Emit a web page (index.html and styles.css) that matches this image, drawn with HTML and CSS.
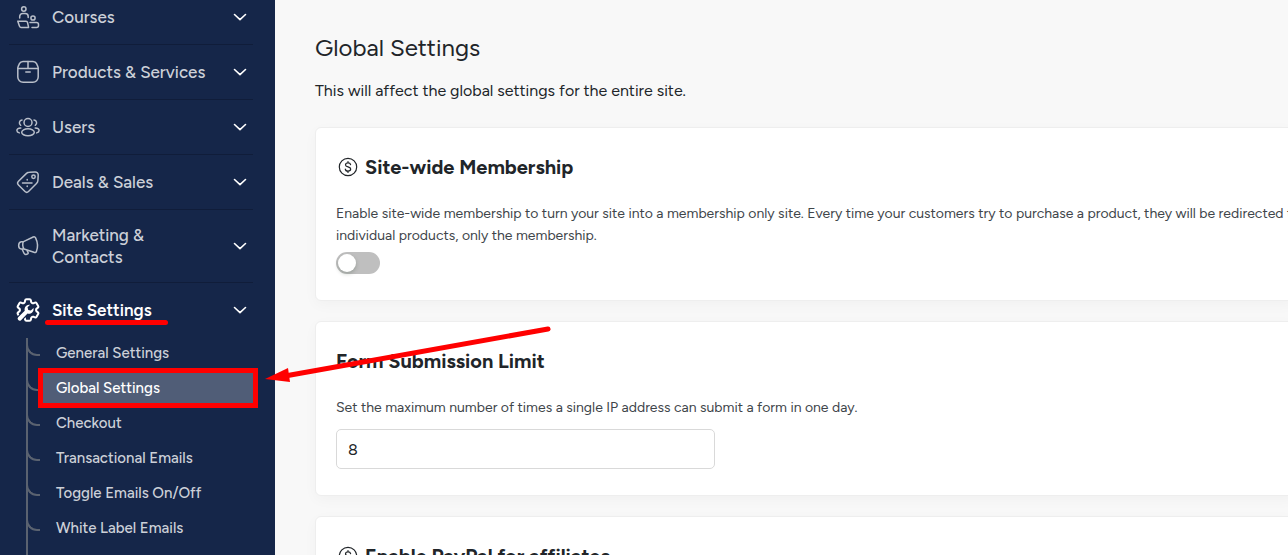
FILE: index.html
```html
<!DOCTYPE html>
<html lang="en">
<head>
    <meta charset="UTF-8">
    <meta name="viewport" content="width=device-width, initial-scale=1.0">
    <title>Global Settings</title>
    <link rel="stylesheet" href="styles.css">
</head>
<body>
    <div class="layout">
        <nav class="sidebar" aria-label="Main">
            <button class="menu-item first" type="button">
                <svg class="menu-icon" viewBox="0 0 24 24"><circle cx="7.800" cy="4" r="2.200"/><path d="M3.700 13v-1.500a3 3 0 0 1 3-3h2.500a3 3 0 0 1 3 3v1"/><circle cx="17" cy="13" r="2.100"/><path d="M14 17.500h6.500a2 2 0 0 1 2 2v1a2 2 0 0 1-2 2H16M1.800 16.200h8.200a1.500 1.500 0 0 1 1.500 1.200l1.100 5H5a1.500 1.500 0 0 1-1.500-1.200z"/></svg>
                <span class="menu-label">Courses</span>
                <svg class="chevron" viewBox="0 0 14 8"><path d="M1.500 1.500 7 6.700l5.500-5.200"/></svg>
            </button>
            <button class="menu-item" type="button">
                <svg class="menu-icon" viewBox="0 0 24 24"><path d="M7 1.500h10a4 4 0 0 1 3.600 2.200l1.200 2.700a4 4 0 0 1 .4 1.800V17a5.300 5.300 0 0 1-5.300 5.300H7.100A5.300 5.300 0 0 1 1.800 17V8.200a4 4 0 0 1 .4-1.800l1.200-2.700A4 4 0 0 1 7 1.500z"/><path d="M2 8.500h20M12 1.500v7M9.800 12h4.400"/></svg>
                <span class="menu-label">Products &amp; Services</span>
                <svg class="chevron" viewBox="0 0 14 8"><path d="M1.500 1.500 7 6.700l5.500-5.200"/></svg>
            </button>
            <button class="menu-item" type="button">
                <svg class="menu-icon" viewBox="0 0 24 24"><circle cx="12" cy="7.500" r="4"/><ellipse cx="12" cy="17.300" rx="6.300" ry="3.500"/><path d="M6 5a2.900 2.900 0 0 0-1.300 5.300M18 5a2.900 2.900 0 0 1 1.300 5.300M4.800 13c-2.400.2-3.900 1-3.900 2.500 0 1.200.9 2 2.400 2.400M19.200 13c2.400.2 3.900 1 3.900 2.500 0 1.200-.9 2-2.400 2.400"/></svg>
                <span class="menu-label">Users</span>
                <svg class="chevron" viewBox="0 0 14 8"><path d="M1.500 1.500 7 6.700l5.500-5.200"/></svg>
            </button>
            <button class="menu-item" type="button">
                <svg class="menu-icon" viewBox="0 0 24 24"><path d="M13.500 2.200 19 1.900a3 3 0 0 1 3.200 3.200l-.3 5.400a4.500 4.500 0 0 1-1.400 3l-8 8a2.500 2.500 0 0 1-3.500 0L2.500 15a2.700 2.700 0 0 1 0-3.800l8-7.800a4.500 4.500 0 0 1 3-1.200z"/><circle cx="17.500" cy="6.700" r="1.700"/><path d="M6.500 13h9.500M11.200 9.600v.4M11.200 16v.4"/></svg>
                <span class="menu-label">Deals &amp; Sales</span>
                <svg class="chevron" viewBox="0 0 14 8"><path d="M1.500 1.500 7 6.700l5.500-5.200"/></svg>
            </button>
            <button class="menu-item" type="button">
                <svg class="menu-icon" viewBox="0 0 24 24"><path d="M7.500 7.700 17.200 3c1-.5 1.900-.2 2.400.8 2.200 4.500 2.400 9.500.8 13.700-.4 1-1.400 1.300-2.400.8L8 15M7.500 7.700C6.300 9.500 6.500 13 8 15M7.500 7.700H5.200C1.800 8.400 1.800 14.600 5.200 15H8M6 15l2 4.300a2 2 0 0 0 1.900 1.200l1.600-.4a1 1 0 0 0 .6-1.400L11 16.500"/></svg>
                <span class="menu-label">Marketing &amp; Contacts</span>
                <svg class="chevron" viewBox="0 0 14 8"><path d="M1.500 1.500 7 6.700l5.500-5.200"/></svg>
            </button>
            <button class="menu-item active" type="button" aria-expanded="true">
                <svg class="menu-icon" viewBox="2 2 20 20"><path d="M9.594 3.940c.09-.542.560-.940 1.110-.940h2.593c.550 0 1.020.398 1.110.940l.213 1.281c.063.374.313.686.645.870.074.040.147.083.220.127.325.196.720.257 1.075.124l1.217-.456a1.125 1.125 0 0 1 1.370.490l1.296 2.247a1.125 1.125 0 0 1-.260 1.431l-1.003.827c-.293.241-.438.613-.430.992a7.723 7.723 0 0 1 0 .255c-.008.378.137.750.430.991l1.004.827c.424.350.534.955.260 1.430l-1.298 2.247a1.125 1.125 0 0 1-1.369.491l-1.217-.456c-.355-.133-.750-.072-1.076.124a6.470 6.470 0 0 1-.220.128c-.331.183-.581.495-.644.869l-.213 1.281c-.090.543-.560.940-1.110.940h-2.594c-.550 0-1.019-.398-1.110-.940l-.213-1.281c-.062-.374-.312-.686-.644-.870a6.520 6.520 0 0 1-.220-.127c-.325-.196-.720-.257-1.076-.124l-1.217.456a1.125 1.125 0 0 1-1.369-.490l-1.297-2.247a1.125 1.125 0 0 1 .260-1.431l1.004-.827c.292-.240.437-.613.430-.991a6.932 6.932 0 0 1 0-.255c.007-.380-.138-.751-.430-.992l-1.004-.827a1.125 1.125 0 0 1-.260-1.430l1.297-2.247a1.125 1.125 0 0 1 1.370-.491l1.216.456c.356.133.751.072 1.076-.124.072-.044.146-.086.220-.128.332-.183.582-.495.644-.869z"/><path class="wrench" d="M13.800 7.600a4 4 0 0 0-4.500 5.100l-5.500 5.400a1.700 1.700 0 0 0 2.400 2.400l5.400-5.500a4 4 0 0 0 5-4.700l-2.200 2.200-2.200-.6-.6-2.200z"/></svg>
                <span class="menu-label"><span class="marked">Site Settings</span></span>
                <svg class="chevron" viewBox="0 0 14 8"><path d="M1.500 1.500 7 6.700l5.500-5.200"/></svg>
            </button>
            <ul class="submenu">
                <li><a href="#">General Settings</a></li>
                <li class="current">
                    <a href="#" aria-current="page">Global Settings</a>
                    <svg class="arrow" viewBox="0 0 290 64" aria-hidden="true"><path class="arrow-line" d="M283 6 20 53"/><path class="arrow-head" d="m0 56 23-11 2 14z"/></svg>
                </li>
                <li><a href="#">Checkout</a></li>
                <li><a href="#">Transactional Emails</a></li>
                <li><a href="#">Toggle Emails On/Off</a></li>
                <li><a href="#">White Label Emails</a></li>
            </ul>
        </nav>

        <main class="content">
            <h1>Global Settings</h1>
            <p class="intro">This will affect the global settings for the entire site.</p>

            <section class="card">
                <h2>
                    <svg class="coin" viewBox="0 0 20 20"><circle cx="10" cy="10" r="8.700"/><path d="M12.600 7.700c-.2-1.100-1.200-1.800-2.600-1.800-1.500 0-2.500.8-2.500 2 0 2.800 5.200 1.300 5.200 4.200 0 1.200-1.100 2-2.700 2-1.500 0-2.600-.8-2.700-2M10 4.600v1.300M10 14.100v1.300"/></svg>
                    Site-wide Membership
                </h2>
                <p id="membership-text">Enable site-wide membership to turn your site into a membership only site. Every time your customers try to purchase a product, they will be redirected to<br>individual products, only the membership.</p>
                <input class="switch" type="checkbox" role="switch" aria-label="Site-wide Membership" aria-describedby="membership-text">
            </section>

            <section class="card">
                <h2>Form Submission Limit</h2>
                <label for="limit">Set the maximum number of times a single IP address can submit a form in one day.</label>
                <input class="field" id="limit" type="text" value="8">
            </section>

            <section class="card">
                <h2>
                    <svg class="coin" viewBox="0 0 20 20"><circle cx="10" cy="10" r="8.700"/><path d="M12.600 7.700c-.2-1.100-1.200-1.800-2.600-1.800-1.500 0-2.500.8-2.500 2 0 2.800 5.200 1.300 5.200 4.200 0 1.200-1.100 2-2.700 2-1.500 0-2.600-.8-2.700-2M10 4.600v1.300M10 14.100v1.300"/></svg>
                    Enable PayPal for affiliates
                </h2>
            </section>
        </main>
    </div>
</body>
</html>
```
FILE: styles.css
```css
*,
*::before,
*::after {
    box-sizing: border-box;
    margin: 0;
    padding: 0;
}

body {
    height: 100vh;
    overflow: hidden;
    font-family: Figtree, Lato, sans-serif;
    background: #f8f8f8;
    color: #212529;
}

.layout {
    display: flex;
    height: 100%;
}

/* Sidebar */
.sidebar {
    flex: 0 0 275px;
    background: #152649;
    padding: 0 22px 0 9px;
    position: relative;
    z-index: 1;
}

.menu-item {
    display: flex;
    align-items: center;
    width: 100%;
    min-height: 55px;
    padding: 14px 6px 14px 7px;
    border: 0;
    border-bottom: 1px solid #101d3a;
    background: none;
    color: #ccd0d8;
    font-family: inherit;
    font-size: 17px;
    font-weight: 500;
    line-height: 22px;
    text-align: left;
}

.menu-item.first {
    min-height: 0;
    padding-top: 6px;
    padding-bottom: 16px;
}

.menu-item.active {
    border-bottom-color: transparent;
    color: #fff;
    font-weight: 600;
}

.menu-icon {
    flex: none;
    width: 24px;
    height: 24px;
    margin: -1px 12px -1px 0;
    fill: none;
    stroke: #b9bfca;
    stroke-width: 1.5;
    stroke-linecap: round;
    stroke-linejoin: round;
}

.active .menu-icon {
    stroke: #fff;
    stroke-width: 1.7;
}

.active .menu-icon .wrench {
    fill: #fff;
    stroke: #152649;
    stroke-width: 2;
    paint-order: stroke;
}

.menu-label {
    flex: 1;
    padding-right: 22px;
}

.marked {
    position: relative;
}

.marked::after {
    content: '';
    position: absolute;
    left: -7px;
    right: -16px;
    bottom: -5px;
    height: 5px;
    border-radius: 3px;
    background: #f00;
}

.chevron {
    flex: none;
    width: 14px;
    height: 8px;
    fill: none;
    stroke: #fff;
    stroke-width: 1.6;
    stroke-linecap: round;
    stroke-linejoin: round;
}

.submenu {
    list-style: none;
    margin-left: 17px;
    padding-bottom: 40px;
    border-left: 2px solid #5a6270;
}

.submenu li {
    position: relative;
    height: 35px;
    padding-left: 15px;
}

.submenu li::before {
    content: '';
    position: absolute;
    left: -2px;
    top: 4px;
    width: 14px;
    height: 14px;
    border-left: 2px solid #5a6270;
    border-bottom: 2px solid #5a6270;
    border-bottom-left-radius: 11px;
}

.submenu a {
    display: block;
    position: relative;
    padding-left: 13px;
    color: #ccd0d8;
    font-size: 15px;
    font-weight: 500;
    line-height: 30px;
    text-decoration: none;
}

.submenu .current a {
    background: #505d77;
    color: #fff;
    outline: 5px solid #f00;
}

.arrow {
    position: absolute;
    left: 237px;
    top: -50px;
    width: 290px;
    height: 64px;
}

.arrow-line {
    fill: none;
    stroke: #f00;
    stroke-width: 5;
    stroke-linecap: round;
}

.arrow-head {
    fill: #f00;
}

/* Settings page */
.content {
    flex: 1;
    min-width: 0;
    overflow: hidden;
    padding: 32px 0 0 40px;
}

h1 {
    font-size: 24px;
    font-weight: 400;
    line-height: 32px;
}

.intro {
    margin: 14px 0 24px;
    font-size: 16px;
    line-height: 25px;
}

.card {
    margin: 0 -8px 20px 0;
    padding: 19px 20px 26px;
    border: 1px solid #eee;
    border-radius: 6px;
    background: #fff;
    box-shadow: 0 4px 14px rgba(0, 0, 0, 0.03);
    white-space: nowrap;
}

h2 {
    display: flex;
    align-items: center;
    gap: 7px;
    margin-bottom: 16px;
    font-size: 20px;
    font-weight: 700;
    line-height: 40px;
}

.coin {
    width: 20px;
    height: 20px;
    margin-left: 2px;
    fill: none;
    stroke: #212529;
    stroke-width: 1.2;
    stroke-linecap: round;
}

.card p,
.card label {
    display: block;
    color: #40454a;
    font-size: 14px;
    line-height: 22px;
}

.switch {
    display: block;
    appearance: none;
    width: 44px;
    height: 22px;
    margin-top: 5px;
    padding: 2px;
    border-radius: 11px;
    background: #bfbfbf;
}

.switch::before {
    content: '';
    display: block;
    width: 18px;
    height: 18px;
    border-radius: 50%;
    background: #fff;
    box-shadow: 0 2px 4px rgba(0, 35, 11, 0.2);
}

.field {
    display: block;
    width: 379px;
    height: 40px;
    margin-top: 10px;
    padding: 0 11px;
    border: 1px solid #d9d9d9;
    border-radius: 5px;
    color: #212529;
    font-family: inherit;
    font-size: 16px;
}
```
